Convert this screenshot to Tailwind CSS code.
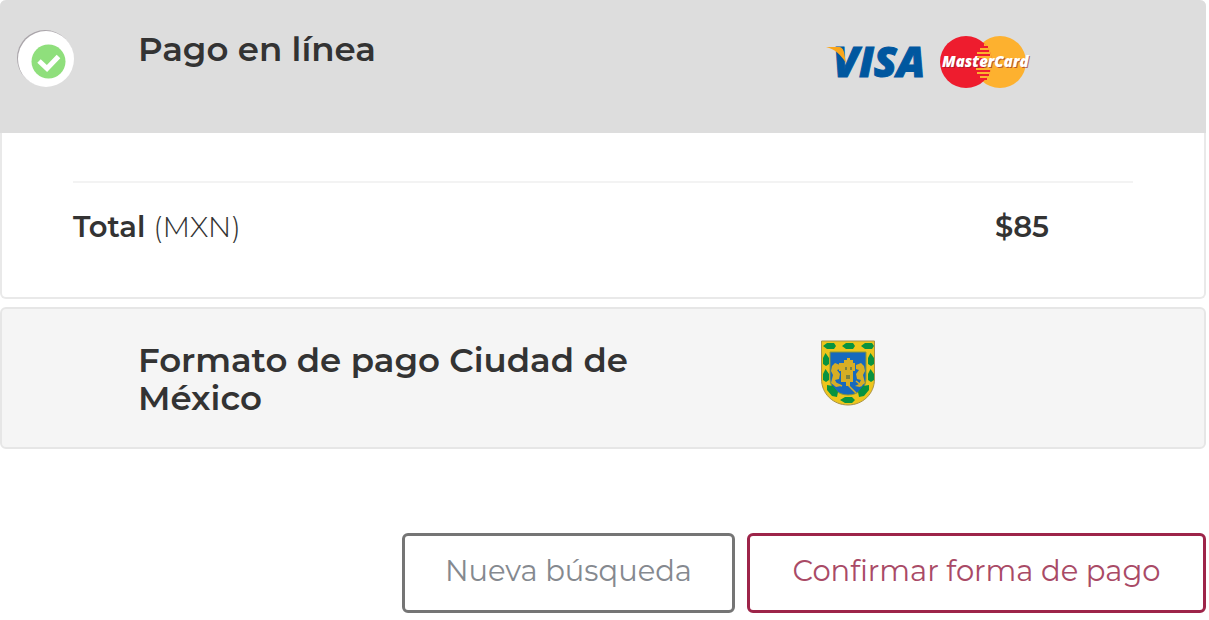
<!DOCTYPE html>
<html lang="es">
<head>
  <meta charset="UTF-8">
  <meta name="viewport" content="width=device-width, initial-scale=1.0">
  <title>Forma de pago</title>
  <script src="https://cdn.jsdelivr.net/npm/@tailwindcss/browser@4"></script>
</head>
<body class="bg-white font-['Montserrat','Inter',sans-serif] text-[#333333]">
  <form class="pr-[3px]">
    <!-- Online payment -->
    <section class="rounded-md border-2 border-t-0 border-[#e9e9e9] bg-white">
      <label for="pagoLinea" class="-mx-0.5 grid h-[133px] cursor-pointer grid-cols-[138px_7fr_4fr] rounded-t-md bg-[#dddddd]">
        <span class="pt-[30px] pl-[17px]">
          <input type="radio" id="pagoLinea" name="formaPago" class="peer sr-only" checked>
          <svg class="invisible h-[58px] w-[58px] peer-checked:visible" viewBox="0 0 58 58" aria-hidden="true">
            <circle cx="28" cy="28" r="28" fill="#aaa5aa"/>
            <circle cx="29" cy="29" r="28" fill="#ffffff"/>
            <circle cx="31.500" cy="31.500" r="17" fill="#8fdf7c"/>
            <path d="M22 31l8 7.500 11.500-12" fill="none" stroke="#ffffff" stroke-width="5"/>
          </svg>
        </span>
        <span class="pt-[30px] text-[34px] leading-[38px] font-semibold">Pago en línea</span>
        <span class="flex gap-3 pt-[35px] pl-2">
          <svg class="h-[54px] w-[102px] overflow-visible" viewBox="0 0 102 54" role="img" aria-label="Visa">
            <text x="7" y="42" font-family="Open Sans, sans-serif" font-size="42" font-weight="800" font-style="italic" fill="#00579f" stroke="#00579f">VISA</text>
            <path d="M0 12h12c4 0 5 2 6 5l2 11C15 20 9 14 0 12z" fill="#faa61a"/>
          </svg>
          <svg class="h-[54px] w-[90px] overflow-visible" viewBox="0 0 90 54" role="img" aria-label="MasterCard">
            <circle cx="60" cy="27" r="26" fill="#fdb12f"/>
            <circle cx="26" cy="27" r="26" fill="#ee1c2e"/>
            <path d="M44 8a26 26 0 0 1 0 38z" fill="#fdb12f"/>
            <path d="M40 14h6M37 18h8M36 22h9M36 34h9M37 38h8M40 42h6" stroke="#fdb12f" stroke-width="2"/>
            <path d="M43 12h5M43 16h6M43 20h7M43 36h7M43 40h6M43 44h4" stroke="#ee1c2e" stroke-width="2"/>
            <text x="3" y="33" font-family="Open Sans, sans-serif" font-size="15" font-weight="800" font-style="italic" fill="#8b1a2b" fill-opacity="0.600">MasterCard</text>
            <text x="2" y="32" font-family="Open Sans, sans-serif" font-size="15" font-weight="800" font-style="italic" fill="#ffffff">MasterCard</text>
          </svg>
        </span>
      </label>
      <div class="px-[71px] pt-12 pb-[52px]">
        <div class="flex justify-between border-t-2 border-[#f3f3f3] pt-[26px] pr-[84px] text-[29px] leading-9">
          <p class="font-semibold">Total <span class="font-light">(MXN)</span></p>
          <p class="font-semibold">$85</p>
        </div>
      </div>
    </section>

    <!-- Printed payment form -->
    <section class="mt-2 rounded-md border-2 border-[#e6e6e6] bg-[#f5f5f5]">
      <label for="pagoFormato" class="-mx-0.5 grid h-[138px] cursor-pointer grid-cols-[138px_7fr_4fr]">
        <span class="pt-[30px] pl-[17px]">
          <input type="radio" id="pagoFormato" name="formaPago" class="sr-only">
        </span>
        <span class="pt-8 pr-32 text-[34px] leading-[38px] font-semibold">Formato de pago Ciudad de México</span>
        <span class="pt-[31px] pl-0.5">
          <svg class="h-[66px] w-[56px]" viewBox="0 0 56 66" role="img" aria-label="Escudo de la Ciudad de México">
            <path d="M1.500 1h53v38c0 15-12 26-26.500 26S1.500 54 1.500 39z" fill="#eec51c" stroke="#a8924a"/>
            <path d="M10 12h36v27c0 9-8 16-18 16s-18-7-18-16z" fill="#1769bd" stroke="#8c9a34"/>
            <g fill="#09933f">
              <path d="M3 6l4-3 7 0 2 3-2 3-7 0zM22 6l4-3 7 0 2 3-2 3-7 0zM41 6l4-3 7 0 2 3-2 3-7 0z"/>
              <path d="M5.500 13l3.500 5v6l-3 2-3-2v-6zM5.500 29l3.500 5v6l-3 2-3-2v-6zM50.500 13l3.500 5v6l-3 2-3-2v-6zM50.500 29l3.500 5v6l-3 2-3-2v-6z"/>
              <path d="M7 45l6 1 5 6-1 5-5-1-5-6zM49 45l-6 1-5 6 1 5 5-1 5-6zM20 60l5-3 7 0 3 3-3 3-7 0z"/>
            </g>
            <g fill="#d7ae25">
              <path d="M22 23h2v-3h3v-2h3v2h3v3h2v8h-2v11h-3v4h-4v-4h-5V31h-2v-8z"/>
              <path d="M12 26l3-3 5 2v4l-3 1 3 4-1 5-4 1 2 4 4 2-5 1-5-4 2-8-2-4zM44 26l-3-3-5 2v4l3 1-3 4 1 5 4 1-2 4-4 2 5 1 5-4-2-8 2-4z"/>
            </g>
            <path d="M25 27h2v3h-2zM30 27h2v3h-2zM26 35h4v4h-4z" fill="#7b8240"/>
            <path d="M28 45l8 8M22 46l-7-3M36 41l6 5" stroke="#d7ae25" stroke-width="1.500"/>
          </svg>
        </span>
      </label>
    </section>

    <div class="mt-[84px] flex justify-end gap-3 text-[29px] leading-9 font-normal">
      <button type="button" class="h-20 min-w-[333px] cursor-pointer rounded-md border-3 border-[#757575] px-8 pb-1 text-[#85898f]">Nueva búsqueda</button>
      <button type="submit" class="h-20 min-w-[459px] cursor-pointer rounded-md border-3 border-[#9d2449] px-8 pb-1 text-[#a94a66]">Confirmar forma de pago</button>
    </div>
  </form>
</body>
</html>
